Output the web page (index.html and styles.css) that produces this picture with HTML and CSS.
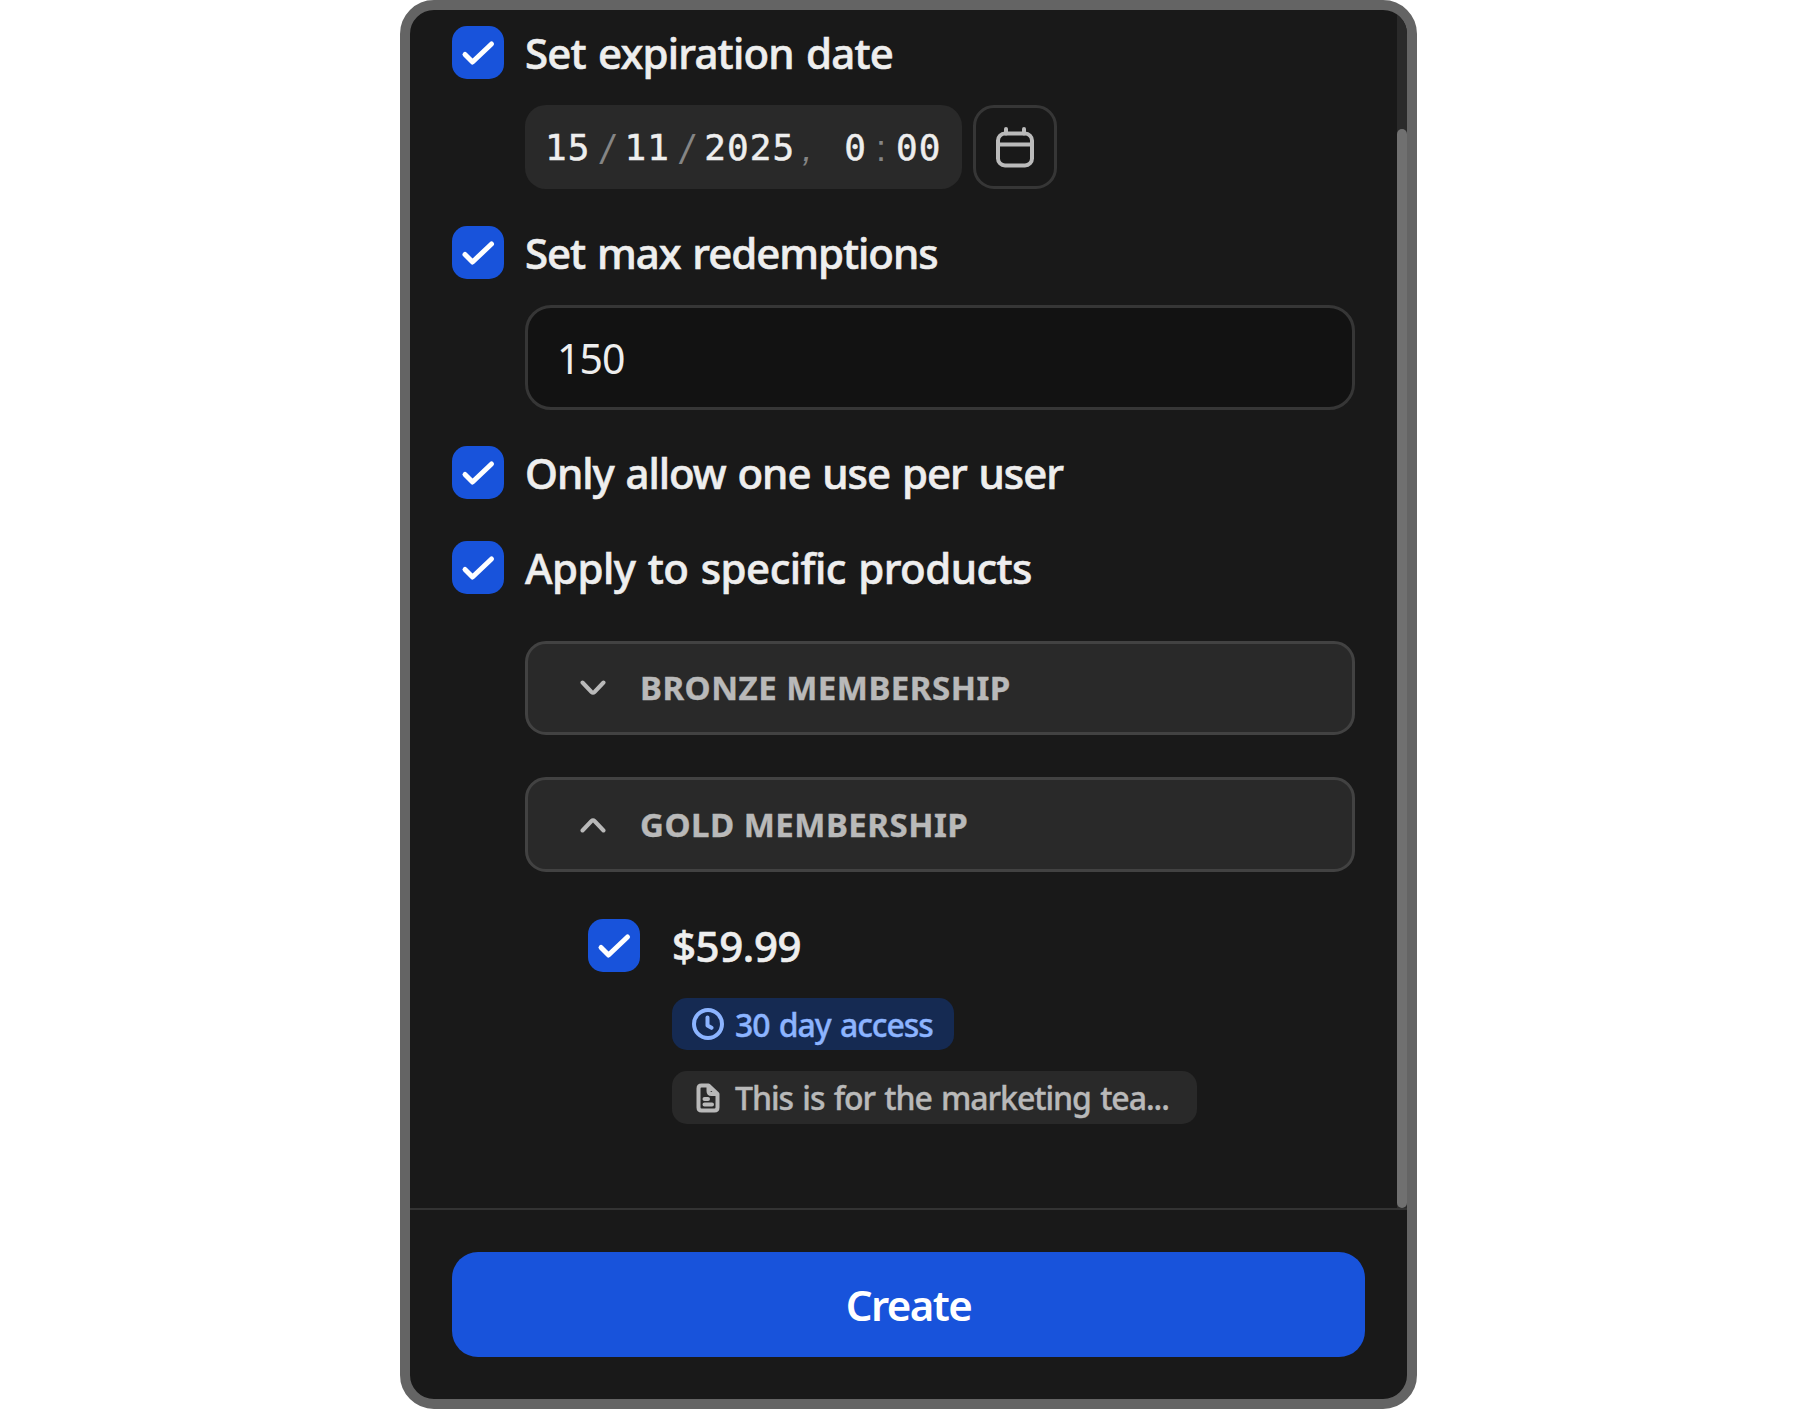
FILE: index.html
```
<!DOCTYPE html>
<html lang="en">
<head>
    <meta charset="UTF-8">
    <meta name="viewport" content="width=device-width, initial-scale=1.0">
    <title>Create Promo Code</title>
    <link rel="stylesheet" href="styles.css">
</head>
<body>

    <div class="dialog">
        <div class="content">
            <form class="options" id="promoForm">

                <div class="option">
                    <span class="checkbox"><svg viewBox="0 0 52 52"><path d="M13 28.5 L20.5 36 L39.5 18"/></svg></span>
                    <span class="label expiration">Set expiration date</span>
                </div>
                <div class="date-row">
                    <div class="date-field">
                        <span>15</span><span class="sep slash">/</span><span>11</span><span class="sep slash">/</span><span>2025</span><span class="sep comma">,</span><span>0</span><span class="sep colon">:</span><span>00</span>
                    </div>
                    <button type="button" class="calendar">
                        <svg viewBox="0 0 40 44">
                            <rect x="3" y="8.5" width="34" height="32" rx="7"/>
                            <path d="M3 19.5 H37 M11 4 V8.5 M29 4 V8.5"/>
                        </svg>
                    </button>
                </div>

                <div class="option redemptions-option">
                    <span class="checkbox"><svg viewBox="0 0 52 52"><path d="M13 28.5 L20.5 36 L39.5 18"/></svg></span>
                    <span class="label redemptions">Set max redemptions</span>
                </div>
                <input type="text" class="text-input" value="150">

                <div class="option one-use-option">
                    <span class="checkbox"><svg viewBox="0 0 52 52"><path d="M13 28.5 L20.5 36 L39.5 18"/></svg></span>
                    <span class="label one-use">Only allow one use per user</span>
                </div>

                <div class="option products-option">
                    <span class="checkbox"><svg viewBox="0 0 52 52"><path d="M13 28.5 L20.5 36 L39.5 18"/></svg></span>
                    <span class="label products">Apply to specific products</span>
                </div>

                <div class="group bronze">
                    <svg class="chevron" viewBox="0 0 26 16"><path d="M2.5 2.5 L11.5 12 Q13 13.5 14.5 12 L23.5 2.5"/></svg>
                    <span>BRONZE MEMBERSHIP</span>
                </div>
                <div class="group gold">
                    <svg class="chevron" viewBox="0 0 26 16"><path d="M2.5 13.5 L11.5 4 Q13 2.5 14.5 4 L23.5 13.5"/></svg>
                    <span>GOLD MEMBERSHIP</span>
                </div>

                <div class="price">
                    <span class="checkbox"><svg viewBox="0 0 52 52"><path d="M13 28.5 L20.5 36 L39.5 18"/></svg></span>
                    <div class="price-info">
                        <span class="label amount">$59.99</span>
                        <span class="badge access">
                            <svg viewBox="0 0 32 32">
                                <circle cx="16" cy="16" r="14"/>
                                <path d="M15.5 9.5 V17.5 L19.5 19.8"/>
                            </svg>
                            <span>30 day access</span>
                        </span>
                        <span class="badge note">
                            <svg viewBox="0 0 32 32">
                                <path d="M9.5 3.5 H16.5 L25.5 12 V25.5 Q25.5 28.5 22.5 28.5 H9.5 Q6.5 28.5 6.5 25.5 V6.5 Q6.5 3.5 9.5 3.5 Z M16.5 4 V9 Q16.5 12 19.5 12 H25 M12.5 17 H16 M12.5 22.5 H20"/>
                            </svg>
                            <span>This is for the marketing tea...</span>
                        </span>
                    </div>
                </div>
            </form>
            <div class="scrollbar"><div class="thumb"></div></div>
        </div>

        <div class="footer">
            <button type="submit" form="promoForm" class="create">Create</button>
        </div>
    </div>

</body>
</html>
```
FILE: styles.css
```
* {
    box-sizing: border-box;
}
body {
    margin: 0;
    background-color: #fff;
    font-family: "Noto Sans", "Open Sans", sans-serif;
}
.dialog {
    display: flex;
    flex-direction: column;
    width: 1017px;
    height: 1409px;
    margin: 0 auto;
    background-color: #191919;
    border: 10px solid #646464;
    border-radius: 34px;
    overflow: hidden;
}
.content {
    display: flex;
    height: 1198px;
}
.options {
    flex: 1;
    padding: 16px 42px 0 42px;
}
.option {
    display: flex;
    align-items: center;
    gap: 21px;
    height: 53px;
}
.checkbox {
    width: 52px;
    height: 53px;
    border-radius: 15px;
    background-color: #1853db;
}
.checkbox svg {
    display: block;
    fill: none;
    stroke: #fff;
    stroke-width: 5;
    stroke-linecap: round;
    stroke-linejoin: round;
}
.label {
    color: #eee;
    font-size: 42px;
    font-weight: 500;
    line-height: 53px;
    white-space: nowrap;
    word-spacing: 2px;
    -webkit-text-stroke: 0.6px #eee;
}
.expiration {
    letter-spacing: -0.8px;
}
.redemptions {
    letter-spacing: -1.05px;
}
.one-use {
    letter-spacing: -1.05px;
}
.products {
    letter-spacing: -0.55px;
}
.date-row {
    display: flex;
    gap: 11px;
    margin: 26px 0 0 73px;
}
.date-field {
    display: flex;
    align-items: center;
    width: 437px;
    height: 84px;
    padding-left: 20px;
    border-radius: 21px;
    background-color: #292929;
    color: #eee;
    font-family: "DejaVu Sans Mono", monospace;
    font-size: 36px;
    letter-spacing: 1.1px;
    -webkit-text-stroke: 0.5px #eee;
}
.sep {
    width: 34px;
    padding-top: 4px;
    color: #858585;
    font-family: "Liberation Sans", sans-serif;
    text-align: center;
    -webkit-text-stroke: 0;
}
.slash {
    padding-top: 7px;
    font-size: 40px;
    font-style: italic;
}
.comma {
    width: 49px;
    padding-right: 24px;
    font-style: italic;
}
.colon {
    width: 29px;
}
.calendar {
    display: flex;
    align-items: center;
    justify-content: center;
    width: 84px;
    height: 84px;
    padding: 0;
    border: 3px solid #363636;
    border-radius: 21px;
    background: none;
}
.calendar svg {
    width: 40px;
    height: 44px;
    fill: none;
    stroke: #bbb;
    stroke-width: 4;
    stroke-linecap: round;
}
.redemptions-option {
    margin-top: 37px;
}
.text-input {
    display: block;
    width: 830px;
    height: 105px;
    margin: 26px 0 0 73px;
    padding: 0 29px;
    border: 3px solid #363636;
    border-radius: 26px;
    background-color: #121212;
    color: #eee;
    font-family: inherit;
    font-size: 41px;
    letter-spacing: -1px;
}
.one-use-option {
    margin-top: 36px;
}
.products-option {
    margin-top: 42px;
}
.group {
    display: flex;
    align-items: center;
    gap: 34px;
    width: 830px;
    height: 94px;
    margin-left: 73px;
    padding-left: 52px;
    border: 3px solid #424242;
    border-radius: 21px;
    background-color: #292929;
    color: #b9b9b9;
    font-size: 33px;
    font-weight: 700;
    letter-spacing: 0.5px;
    -webkit-text-stroke: 0.4px #b9b9b9;
}
.bronze {
    margin-top: 47px;
    padding-bottom: 1px;
}
.gold {
    height: 95px;
    margin-top: 42px;
}
.chevron {
    width: 26px;
    height: 16px;
    fill: none;
    stroke: #b9b9b9;
    stroke-width: 4;
    stroke-linecap: round;
}
.price {
    display: flex;
    gap: 32px;
    margin: 47px 0 0 136px;
}
.price-info {
    display: flex;
    flex-direction: column;
    align-items: flex-start;
}
.amount {
    letter-spacing: -0.4px;
}
.badge {
    display: flex;
    align-items: center;
    gap: 11px;
    height: 52px;
    padding: 0 20px;
    border-radius: 15px;
    font-size: 32px;
    font-weight: 500;
    letter-spacing: -1.05px;
    word-spacing: 2px;
    white-space: nowrap;
    -webkit-text-stroke: 0.4px currentColor;
}
.badge svg {
    width: 32px;
    height: 32px;
    fill: none;
    stroke: currentColor;
    stroke-width: 4;
    stroke-linecap: round;
    stroke-linejoin: round;
}
.access {
    width: 282px;
    margin-top: 26px;
    background-color: #152a52;
    color: #8cb4ff;
}
.note {
    width: 525px;
    height: 53px;
    margin-top: 21px;
    background-color: #292929;
    color: #b9b9b9;
}
.scrollbar {
    width: 10px;
    padding-top: 119px;
    background-color: #2a2a2a;
}
.thumb {
    height: 1079px;
    border-radius: 5px;
    background-color: #707070;
}
.footer {
    flex: 1;
    padding: 42px;
    border-top: 2px solid #333;
}
.create {
    display: block;
    width: 913px;
    height: 105px;
    border: none;
    border-radius: 26px;
    background-color: #1853db;
    color: #fff;
    font-family: inherit;
    font-size: 42px;
    font-weight: 600;
    letter-spacing: -1.6px;
    cursor: pointer;
}
```
